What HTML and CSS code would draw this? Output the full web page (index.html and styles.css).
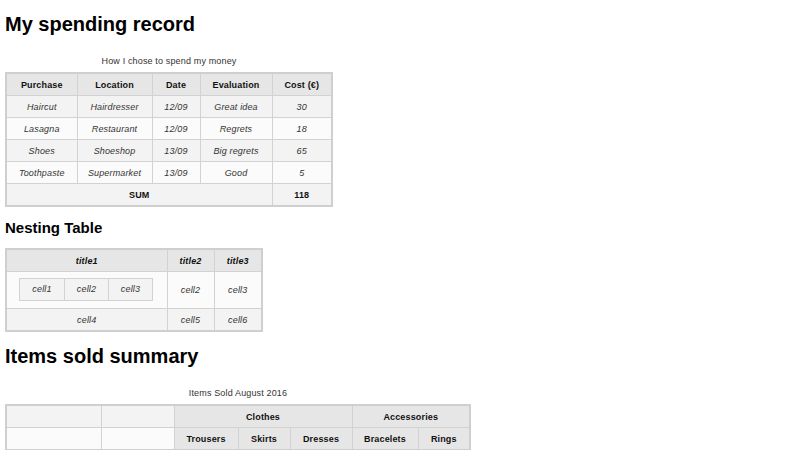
FILE: index.html
```html
<!DOCTYPE html>
<html lang="en">
<head>
<meta charset="utf-8">
<title>Tables</title>
<link rel="stylesheet" href="styles.css">
</head>
<body>
<h1>My spending record</h1>
<table class="t-spend">
  <caption>How I chose to spend my money</caption>
  <colgroup>
    <col class="w71"><col class="w75"><col class="w48"><col class="w72"><col class="w60">
  </colgroup>
  <thead>
    <tr><th>Purchase</th><th>Location</th><th>Date</th><th>Evaluation</th><th>Cost (€)</th></tr>
  </thead>
  <tbody>
    <tr><td>Haircut</td><td>Hairdresser</td><td>12/09</td><td>Great idea</td><td>30</td></tr>
    <tr><td>Lasagna</td><td>Restaurant</td><td>12/09</td><td>Regrets</td><td>18</td></tr>
    <tr><td>Shoes</td><td>Shoeshop</td><td>13/09</td><td>Big regrets</td><td>65</td></tr>
    <tr><td>Toothpaste</td><td>Supermarket</td><td>13/09</td><td>Good</td><td>5</td></tr>
  </tbody>
  <tfoot>
    <tr><th colspan="4">SUM</th><th>118</th></tr>
  </tfoot>
</table>

<h2>Nesting Table</h2>
<table class="t-nest">
  <colgroup>
    <col class="w161"><col class="w47"><col class="w48">
  </colgroup>
  <tbody>
    <tr><th>title1</th><th>title2</th><th>title3</th></tr>
    <tr>
      <td class="holder">
        <table class="inner">
          <colgroup><col class="w45"><col class="w44"><col class="w44"></colgroup>
          <tbody>
            <tr><td>cell1</td><td>cell2</td><td>cell3</td></tr>
          </tbody>
        </table>
      </td>
      <td>cell2</td>
      <td>cell3</td>
    </tr>
    <tr><td>cell4</td><td>cell5</td><td>cell6</td></tr>
  </tbody>
</table>

<h1 class="second">Items sold summary</h1>
<table class="t-sold">
  <caption>Items Sold August 2016</caption>
  <colgroup>
    <col class="w95"><col class="w73"><col class="w64"><col class="w52"><col class="w62"><col class="w66"><col class="w52">
  </colgroup>
  <thead>
    <tr><td></td><td></td><th colspan="3">Clothes</th><th colspan="2">Accessories</th></tr>
    <tr><td></td><td></td><th>Trousers</th><th>Skirts</th><th>Dresses</th><th>Bracelets</th><th>Rings</th></tr>
  </thead>
</table>
</body>
</html>
```

FILE: styles.css
```css
html, body {
  margin: 0;
  padding: 0;
  background: #fff;
}

body {
  padding: 0 5px;
  font-family: "Liberation Sans", Arial, sans-serif;
  color: #222;
}

h1 {
  font-size: 20px;
  line-height: 23px;
  font-weight: bold;
  margin: 13px 0 19px;
  color: #000;
}

h2 {
  font-size: 15px;
  line-height: 17px;
  font-weight: bold;
  margin: 12px 0 12px;
  color: #000;
}

table {
  border-collapse: collapse;
  border: 2px solid #cfcfcf;
  font-size: 9px;
  line-height: 10px;
  letter-spacing: 0.15px;
  table-layout: fixed;
}

caption {
  padding: 1px 0 6px;
  color: #333;
  line-height: 10px;
}

th, td {
  border: 1px solid #d2d2d2;
  padding: 5.5px 3px;
  text-align: center;
  white-space: nowrap;
  overflow: hidden;
}

th {
  background: #e6e6e6;
  font-weight: bold;
  color: #111;
}

td {
  color: #333;
}

tbody {
  font-style: italic;
}

tbody tr:nth-child(odd) {
  background: #f3f3f3;
}

tbody tr:nth-child(even) {
  background: #fbfbfb;
}

thead tr:nth-child(odd), tfoot tr {
  background: #f3f3f3;
}

thead tr:nth-child(even) {
  background: #fbfbfb;
}

tfoot th {
  background: #f3f3f3;
}

.t-spend { width: 326px; }
.t-nest { width: 256px; }
.t-sold { width: 464px; }

.holder {
  padding: 5.5px 0 7.5px;
}

.inner {
  margin: 0 auto 0 12px;
  width: 133px;
  border-width: 1px;
}

.inner td {
  padding: 5.5px 2px;
}

.w44 { width: 44px; }
.w45 { width: 45px; }
.w47 { width: 47px; }
.w48 { width: 48px; }
.w49 { width: 49px; }
.w52 { width: 52px; }
.w53 { width: 53px; }
.w60 { width: 60px; }
.w61 { width: 61px; }
.w62 { width: 62px; }
.w64 { width: 64px; }
.w66 { width: 66px; }
.w71 { width: 71px; }
.w72 { width: 72px; }
.w73 { width: 73px; }
.w75 { width: 75px; }
.w95 { width: 95px; }
.w161 { width: 161px; }
```
